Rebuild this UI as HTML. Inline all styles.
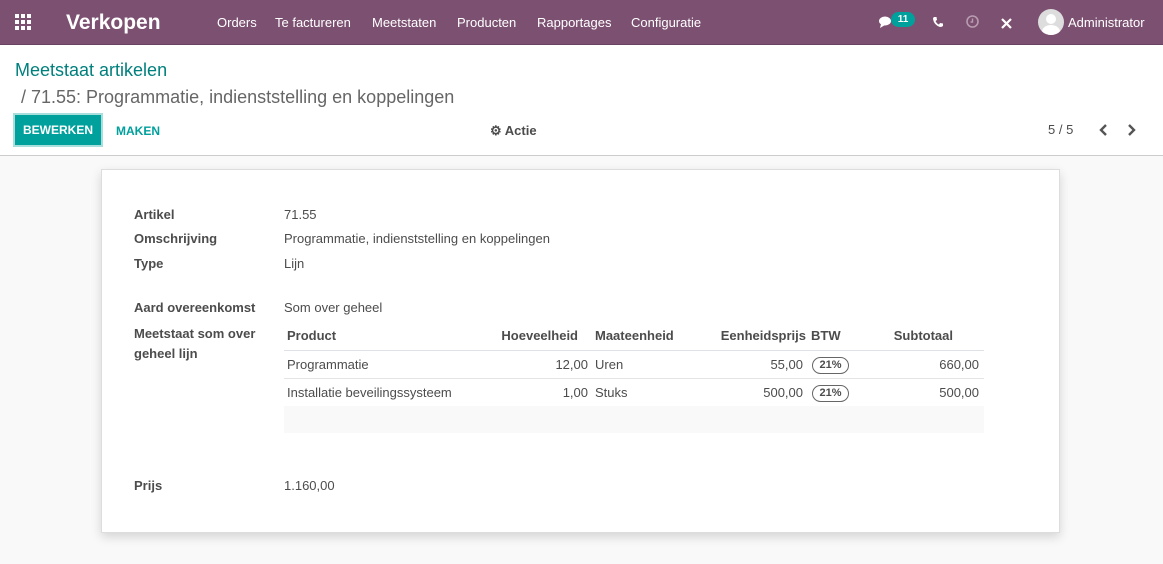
<!DOCTYPE html>
<html><head><meta charset="utf-8"><style>
*{box-sizing:border-box;margin:0;padding:0}
body{width:1163px;height:564px;overflow:hidden;font-family:"Liberation Sans",sans-serif;font-size:13px;color:#4c4c4c;background:#f9f9f9;position:relative}
.nav{position:absolute;left:0;top:0;width:1163px;height:45px;background:#7c5071;color:#fff;border-bottom:1px solid #6a4360}
.nav span{position:absolute;top:15px;font-size:13px}
.cp{position:absolute;left:0;top:45px;width:1163px;height:111px;background:#fff;border-bottom:1px solid #ccc}
.sheet{position:absolute;left:101px;top:169px;width:959px;height:364px;background:#fff;border:1px solid #ddd;box-shadow:0 4px 10px rgba(0,0,0,.15)}
.a{position:absolute;white-space:nowrap}
.b{font-weight:bold;color:#4c4c4c}
.r{text-align:right}
.pill{position:absolute;border:1.5px solid #666;border-radius:9px;height:17px;width:37px;font-size:11px;font-weight:bold;text-align:center;line-height:14px}
</style></head><body>
<div class="nav">
<svg style="position:absolute;left:15px;top:14px" width="18" height="16" viewBox="0 0 18 16" fill="#fff"><rect x="0" y="0" width="4" height="4"/><rect x="6" y="0" width="4" height="4"/><rect x="12" y="0" width="4" height="4"/><rect x="0" y="6" width="4" height="4"/><rect x="6" y="6" width="4" height="4"/><rect x="12" y="6" width="4" height="4"/><rect x="0" y="12" width="4" height="4"/><rect x="6" y="12" width="4" height="4"/><rect x="12" y="12" width="4" height="4"/></svg>
<span style="left:66px;top:11px;font-size:21px;font-weight:bold">Verkopen</span>
<span style="left:217px">Orders</span><span style="left:275px">Te factureren</span><span style="left:372px">Meetstaten</span><span style="left:457px">Producten</span><span style="left:537px">Rapportages</span><span style="left:631px">Configuratie</span>
<svg style="position:absolute;left:879px;top:16px" width="14" height="12" viewBox="0 0 14 12" fill="#fff"><ellipse cx="6" cy="5" rx="6" ry="4.5"/><path d="M2 8 L1 12 L6 9Z"/></svg>
<div class="a" style="left:891px;top:12px;width:24px;height:15px;background:#00a09d;border-radius:8px;font-size:10px;font-weight:bold;text-align:center;line-height:15px">11</div>
<svg style="position:absolute;left:932px;top:16px" width="12" height="12" viewBox="0 0 12 12"><path d="M2 1 L4.5 1 L5 4 L3.5 5 Q5 8 7 8.5 L8 7 L11 7.5 L11 10 Q10 11 8 11 Q2 9 1 3 Q1 1.5 2 1Z" fill="#fff"/></svg>
<svg style="position:absolute;left:966px;top:15px" width="13" height="13"><circle cx="6.5" cy="6.5" r="5.5" fill="none" stroke="#b79cb0" stroke-width="1.6"/><path d="M6.5 3.5V7H4.5" stroke="#b79cb0" fill="none" stroke-width="1.4"/></svg>
<svg style="position:absolute;left:1000px;top:17px" width="13" height="13"><path d="M2 2L11 11M11 2L2 11" stroke="#fff" stroke-width="2.2"/></svg>
<div class="a" style="left:1038px;top:9px;width:26px;height:26px;border-radius:50%;background:#ddd;overflow:hidden"><div style="position:absolute;left:8px;top:5px;width:10px;height:10px;border-radius:50%;background:#fff"></div><div style="position:absolute;left:4px;top:16px;width:18px;height:14px;border-radius:50%;background:#fff"></div></div>
<span style="left:1068px">Administrator</span>
</div>
<div class="cp">
<div class="a" style="left:15px;top:15px;font-size:18px;color:#00807d">Meetstaat artikelen</div>
<div class="a" style="left:21px;top:42px;font-size:18px;color:#666">/ 71.55: Programmatie, indienststelling en koppelingen</div>
<div class="a" style="left:13px;top:68px;width:90px;height:34px;background:#00a09d;border:2px solid #a8dedc;color:#fff;font-size:12px;font-weight:bold;text-align:center;line-height:30px">BEWERKEN</div>
<div class="a" style="left:116px;top:79px;font-size:12px;font-weight:bold;color:#00a09d">MAKEN</div>
<div class="a" style="left:490px;top:78px;font-weight:bold;color:#4c4c4c">⚙ Actie</div>
<div class="a" style="left:1048px;top:77px;color:#4c4c4c">5 / 5</div>
<svg style="position:absolute;left:1099px;top:79px" width="10" height="12"><path d="M7 1L2 6L7 11" stroke="#555" stroke-width="2.4" fill="none"/></svg>
<svg style="position:absolute;left:1126px;top:79px" width="10" height="12"><path d="M3 1L8 6L3 11" stroke="#555" stroke-width="2.4" fill="none"/></svg>
</div>
<div class="sheet">
<div class="a b" style="left:32px;top:37px">Artikel</div><div class="a" style="left:182px;top:37px">71.55</div>
<div class="a b" style="left:32px;top:61px">Omschrijving</div><div class="a" style="left:182px;top:61px">Programmatie, indienststelling en koppelingen</div>
<div class="a b" style="left:32px;top:86px">Type</div><div class="a" style="left:182px;top:86px">Lijn</div>
<div class="a b" style="left:32px;top:130px">Aard overeenkomst</div><div class="a" style="left:182px;top:130px">Som over geheel</div>
<div class="a b" style="left:32px;top:154px;line-height:20px">Meetstaat som over<br>geheel lijn</div>
<div class="a" style="left:182px;top:180px;width:700px;height:1px;background:#dee2e6"></div>
<div class="a" style="left:182px;top:208px;width:700px;height:1px;background:#e4e4e4"></div>
<div class="a" style="left:182px;top:236px;width:700px;height:27px;background:#f9f9f9"></div>
<div class="a b" style="left:185px;top:158px">Product</div>
<div class="a b r" style="left:380px;width:96px;top:158px">Hoeveelheid</div>
<div class="a b" style="left:493px;top:158px">Maateenheid</div>
<div class="a b r" style="left:590px;width:114px;top:158px">Eenheidsprijs</div>
<div class="a b" style="left:709px;top:158px">BTW</div>
<div class="a b r" style="left:760px;width:91px;top:158px">Subtotaal</div>
<div class="a" style="left:185px;top:187px">Programmatie</div>
<div class="a r" style="left:380px;width:106px;top:187px">12,00</div>
<div class="a" style="left:493px;top:187px">Uren</div>
<div class="a r" style="left:600px;width:101px;top:187px">55,00</div>
<div class="pill" style="left:710px;top:187px">21%</div>
<div class="a r" style="left:780px;width:97px;top:187px">660,00</div>
<div class="a" style="left:185px;top:215px">Installatie beveilingssysteem</div>
<div class="a r" style="left:380px;width:106px;top:215px">1,00</div>
<div class="a" style="left:493px;top:215px">Stuks</div>
<div class="a r" style="left:600px;width:101px;top:215px">500,00</div>
<div class="pill" style="left:710px;top:215px">21%</div>
<div class="a r" style="left:780px;width:97px;top:215px">500,00</div>
<div class="a b" style="left:32px;top:308px">Prijs</div><div class="a" style="left:182px;top:308px">1.160,00</div>
</div>
</body></html>
